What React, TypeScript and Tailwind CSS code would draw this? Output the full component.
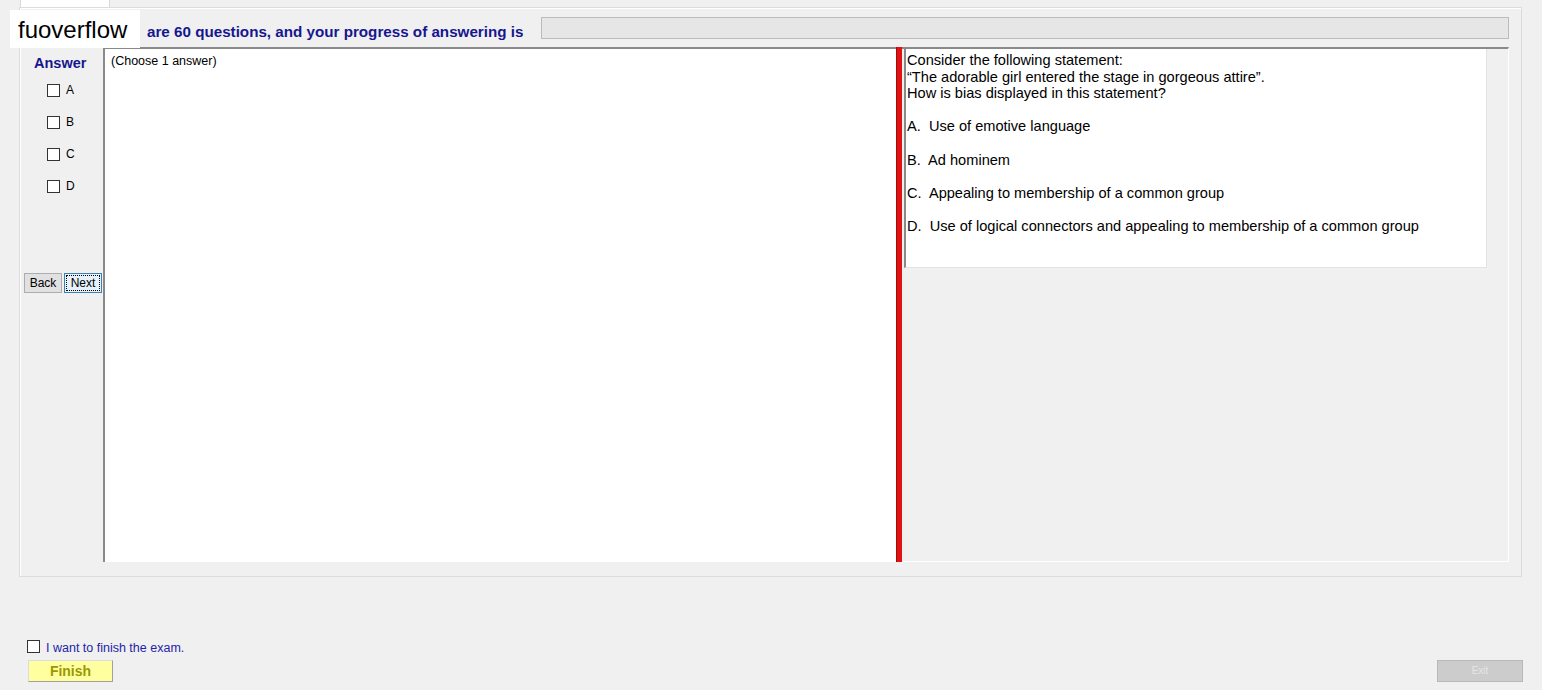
import React from 'react';

const options = [
  { key: 'A', text: 'Use of emotive language' },
  { key: 'B', text: 'Ad hominem' },
  { key: 'C', text: 'Appealing to membership of a common group' },
  { key: 'D', text: 'Use of logical connectors and appealing to membership of a common group' },
];

// Plain WinForms-looking checkbox
const Box = () => <span className="block w-[13px] h-[13px] border border-[#333] bg-white shrink-0" />;

const App = () => {
  return (
    <div className="relative w-full h-[690px] overflow-hidden bg-[#f0f0f0] font-['Liberation_Sans',Arial,sans-serif] text-black">
      {/* tab strip */}
      <div className="h-[7px] flex">
        <div className="ml-[20px] w-[90px] h-[7px] bg-white border-x border-[#d9d9d9]" />
      </div>

      {/* exam group box */}
      <div className="pl-[19px]">
        <div className="w-[1503px] h-[570px] border border-[#dcdcdc] shadow-[inset_1px_1px_0_#ffffff]">
          {/* header: question count + progress */}
          <div className="flex h-[39px]">
            <div className="w-[521px] pl-[127px] pt-[15px] text-[15.2px] leading-[17px] font-bold text-[#16168f] whitespace-nowrap">
              are 60 questions, and your progress of answering is
            </div>
            <div className="mt-[9px] w-[968px] h-[22px] bg-[#e6e6e6] border border-[#bcbcbc]" />
          </div>

          {/* answer column / question content / splitter / question text */}
          <div className="flex h-[515px]">
            <div className="w-[83px] pt-[8px]">
              <div className="pl-[14px] text-[14.5px] leading-[16px] font-bold text-[#16168f]">Answer</div>
              <div className="mt-[13px] pl-[27px] flex flex-col gap-[19px]">
                {options.map((o) => (
                  <label key={o.key} className="flex items-center h-[13px] gap-[6px] text-[12px] leading-[13px]">
                    <Box />
                    <span>{o.key}</span>
                  </label>
                ))}
              </div>
              <div className="mt-[80px] pl-[4px] flex gap-[2px]">
                <button className="w-[38px] h-[20px] bg-[#e1e1e1] border border-[#adadad] text-[12px] leading-[18px]">
                  Back
                </button>
                <button className="w-[38px] h-[20px] bg-[#e5f1fb] border border-[#3c7fb1] p-[1px]">
                  <span className="block h-full border border-dotted border-black text-[12px] leading-[14px]">Next</span>
                </button>
              </div>
            </div>

            <div className="w-[793px] bg-white border-l-2 border-t-2 border-[#8a8a8a] pl-[6px] pt-[4px] text-[12.5px] leading-[16px]">
              (Choose 1 answer)
            </div>

            <div className="w-[6px] bg-[#e31212] border-l border-[#9c0e0e]" />

            <div className="w-[607px] border-t-2 border-[#8a8a8a] border-r border-b border-r-white border-b-white">
              <div className="ml-[2px] w-[583px] h-[219px] bg-white border-l-2 border-[#8a8a8a] border-r border-b border-r-[#e3e3e3] border-b-[#e3e3e3] pl-[1px] pt-[3px] text-[14.6px] leading-[16.6px]">
                <p>Consider the following statement:</p>
                <p>“The adorable girl entered the stage in gorgeous attire”.</p>
                <p className="mb-[16.6px]">How is bias displayed in this statement?</p>
                {options.map((o) => (
                  <p key={o.key} className="mb-[16.6px] whitespace-pre">{`${o.key}.  ${o.text}`}</p>
                ))}
              </div>
            </div>
          </div>
        </div>
      </div>

      {/* finish area */}
      <div className="mt-[63px] pl-[27px] pr-[19px]">
        <label className="flex items-center h-[13px] gap-[6px] text-[12.5px] leading-[13px] text-[#2424a8]">
          <Box />
          <span className="pt-[3px]">I want to finish the exam.</span>
        </label>
        <div className="mt-[7px] flex justify-between">
          <button className="ml-[1px] w-[85px] h-[22px] bg-[#ffffa0] border border-[#dcdcdc] border-r-[#a0a0a0] border-b-[#a0a0a0] text-[14px] leading-[20px] font-bold text-[#999900]">
            Finish
          </button>
          <button className="w-[86px] h-[22px] bg-[#cccccc] border border-[#b8b8b8] text-[10px] leading-[20px] text-[#e6e6e6]">
            Exit
          </button>
        </div>
      </div>

      {/* watermark */}
      <div className="absolute left-[10px] top-[10px] w-[130px] h-[38px] bg-white pl-[8px] text-[24px] leading-[40px] text-black">
        fuoverflow
      </div>
    </div>
  );
};

export default App;
